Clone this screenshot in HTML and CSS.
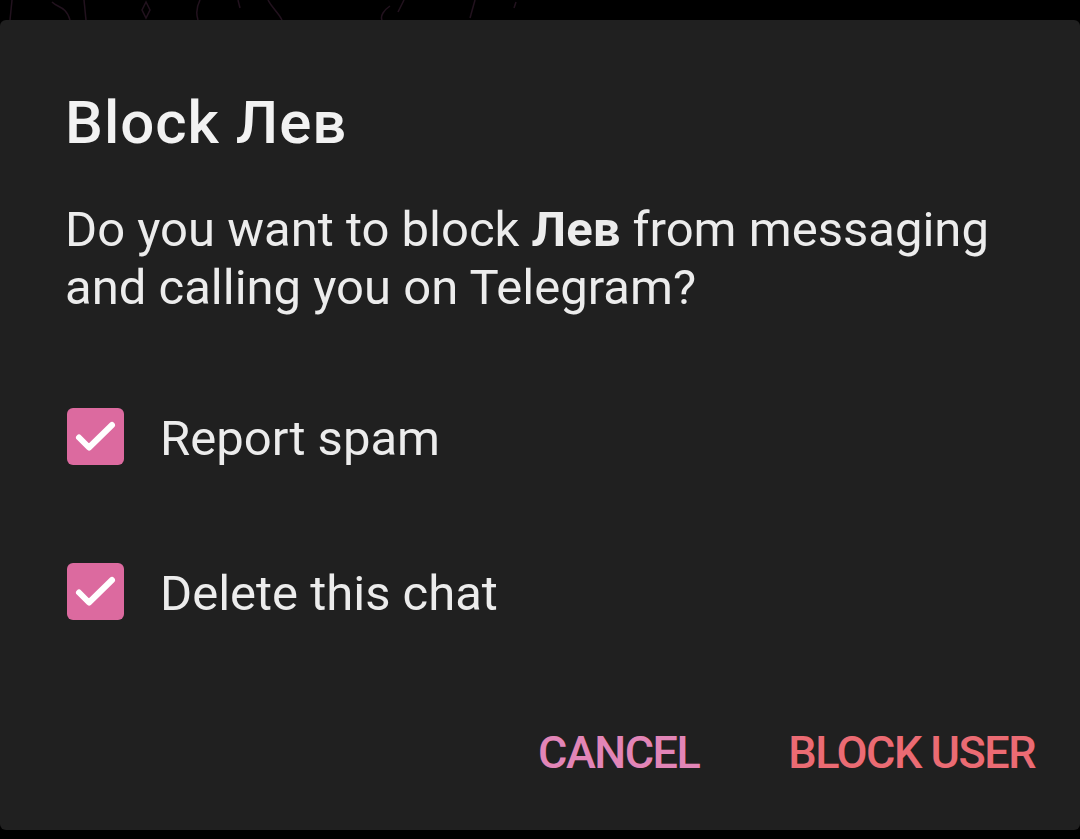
FILE: index.html
```html
<!DOCTYPE html>
<html>
<head>
<meta charset="utf-8">
<link rel="stylesheet" href="styles.css">
</head>
<body>
<div class="screen">
  <div class="strip strip-top">
    <svg width="1080" height="20" viewBox="0 0 1080 20" fill="none" stroke="#22121e" stroke-width="1.5">
      <path d="M12 0 L10 20"/>
      <path d="M52 2 C58 8 66 6 70 20"/>
      <path d="M84 0 L86 20"/>
      <path d="M146 2 L142 10 L146 18 L150 10 Z"/>
      <path d="M200 0 C196 8 196 14 198 20"/>
      <path d="M238 0 L240 8"/>
      <path d="M268 0 C272 8 278 12 282 20"/>
      <path d="M390 6 C384 10 380 16 382 20"/>
      <path d="M404 0 L398 12"/>
      <path d="M475 0 L470 18"/>
      <path d="M516 2 L514 8"/>
    </svg>
  </div>
  <div class="dialog">
    <h1 class="title">Block Лев</h1>
    <p class="message">Do you want to block <b>Лев</b> from messaging and calling you on Telegram?</p>
    <div class="options">
      <div class="option">
        <span class="box"><svg width="57" height="57" viewBox="0 0 57 57"><path d="M12 29.5 L22 39.5 L45 17" fill="none" stroke="#fff" stroke-width="6" stroke-linecap="round" stroke-linejoin="round"/></svg></span>
        <span class="label">Report spam</span>
      </div>
      <div class="option">
        <span class="box"><svg width="57" height="57" viewBox="0 0 57 57"><path d="M12 29.5 L22 39.5 L45 17" fill="none" stroke="#fff" stroke-width="6" stroke-linecap="round" stroke-linejoin="round"/></svg></span>
        <span class="label">Delete this chat</span>
      </div>
    </div>
    <div class="actions">
      <span class="btn btn-cancel">CANCEL</span>
      <span class="btn btn-block">BLOCK USER</span>
    </div>
  </div>
  <div class="strip strip-bottom"></div>
</div>
</body>
</html>
```

FILE: styles.css
```css
html, body {
  margin: 0;
  padding: 0;
  background: #000;
}
body {
  font-family: Roboto, "Noto Sans", sans-serif;
  width: 1080px;
  height: 839px;
  overflow: hidden;
}
.screen {
  display: flex;
  flex-direction: column;
  height: 839px;
}
.strip {
  flex: none;
}
.strip-top {
  height: 20px;
}
.strip-top svg {
  display: block;
}
.strip-bottom {
  height: 9px;
}
.dialog {
  flex: none;
  height: 810px;
  box-sizing: border-box;
  background: #202020;
  border-radius: 6px;
  padding: 0 45px 0 65px;
  display: flex;
  flex-direction: column;
  color: #f2f2f2;
}
.title {
  margin: 68px 0 0 0;
  font-size: 60px;
  font-weight: 500;
  line-height: 70px;
  letter-spacing: 1px;
}
.message {
  margin: 43px 0 0 0;
  font-size: 49px;
  line-height: 58px;
  font-weight: 400;
  color: #ececec;
}
.message b {
  font-weight: 700;
}
.options {
  margin-top: 91px;
  display: flex;
  flex-direction: column;
  gap: 98px;
  margin-left: 2px;
}
.option {
  display: flex;
  align-items: center;
  height: 57px;
}
.box {
  width: 57px;
  height: 57px;
  background: #dc6a9f;
  border-radius: 6px;
  flex: none;
}
.box svg {
  display: block;
}
.label {
  margin-left: 36px;
  font-size: 49px;
  line-height: 57px;
  padding-top: 3px;
  color: #ececec;
}
.actions {
  margin-top: auto;
  margin-bottom: 52px;
  display: flex;
  justify-content: flex-end;
  gap: 89px;
}
.btn {
  font-size: 45px;
  line-height: 50px;
  font-weight: 500;
  letter-spacing: -1.5px;
}
.btn-cancel {
  color: #e285b7;
}
.btn-block {
  color: #eb6b73;
}
```
